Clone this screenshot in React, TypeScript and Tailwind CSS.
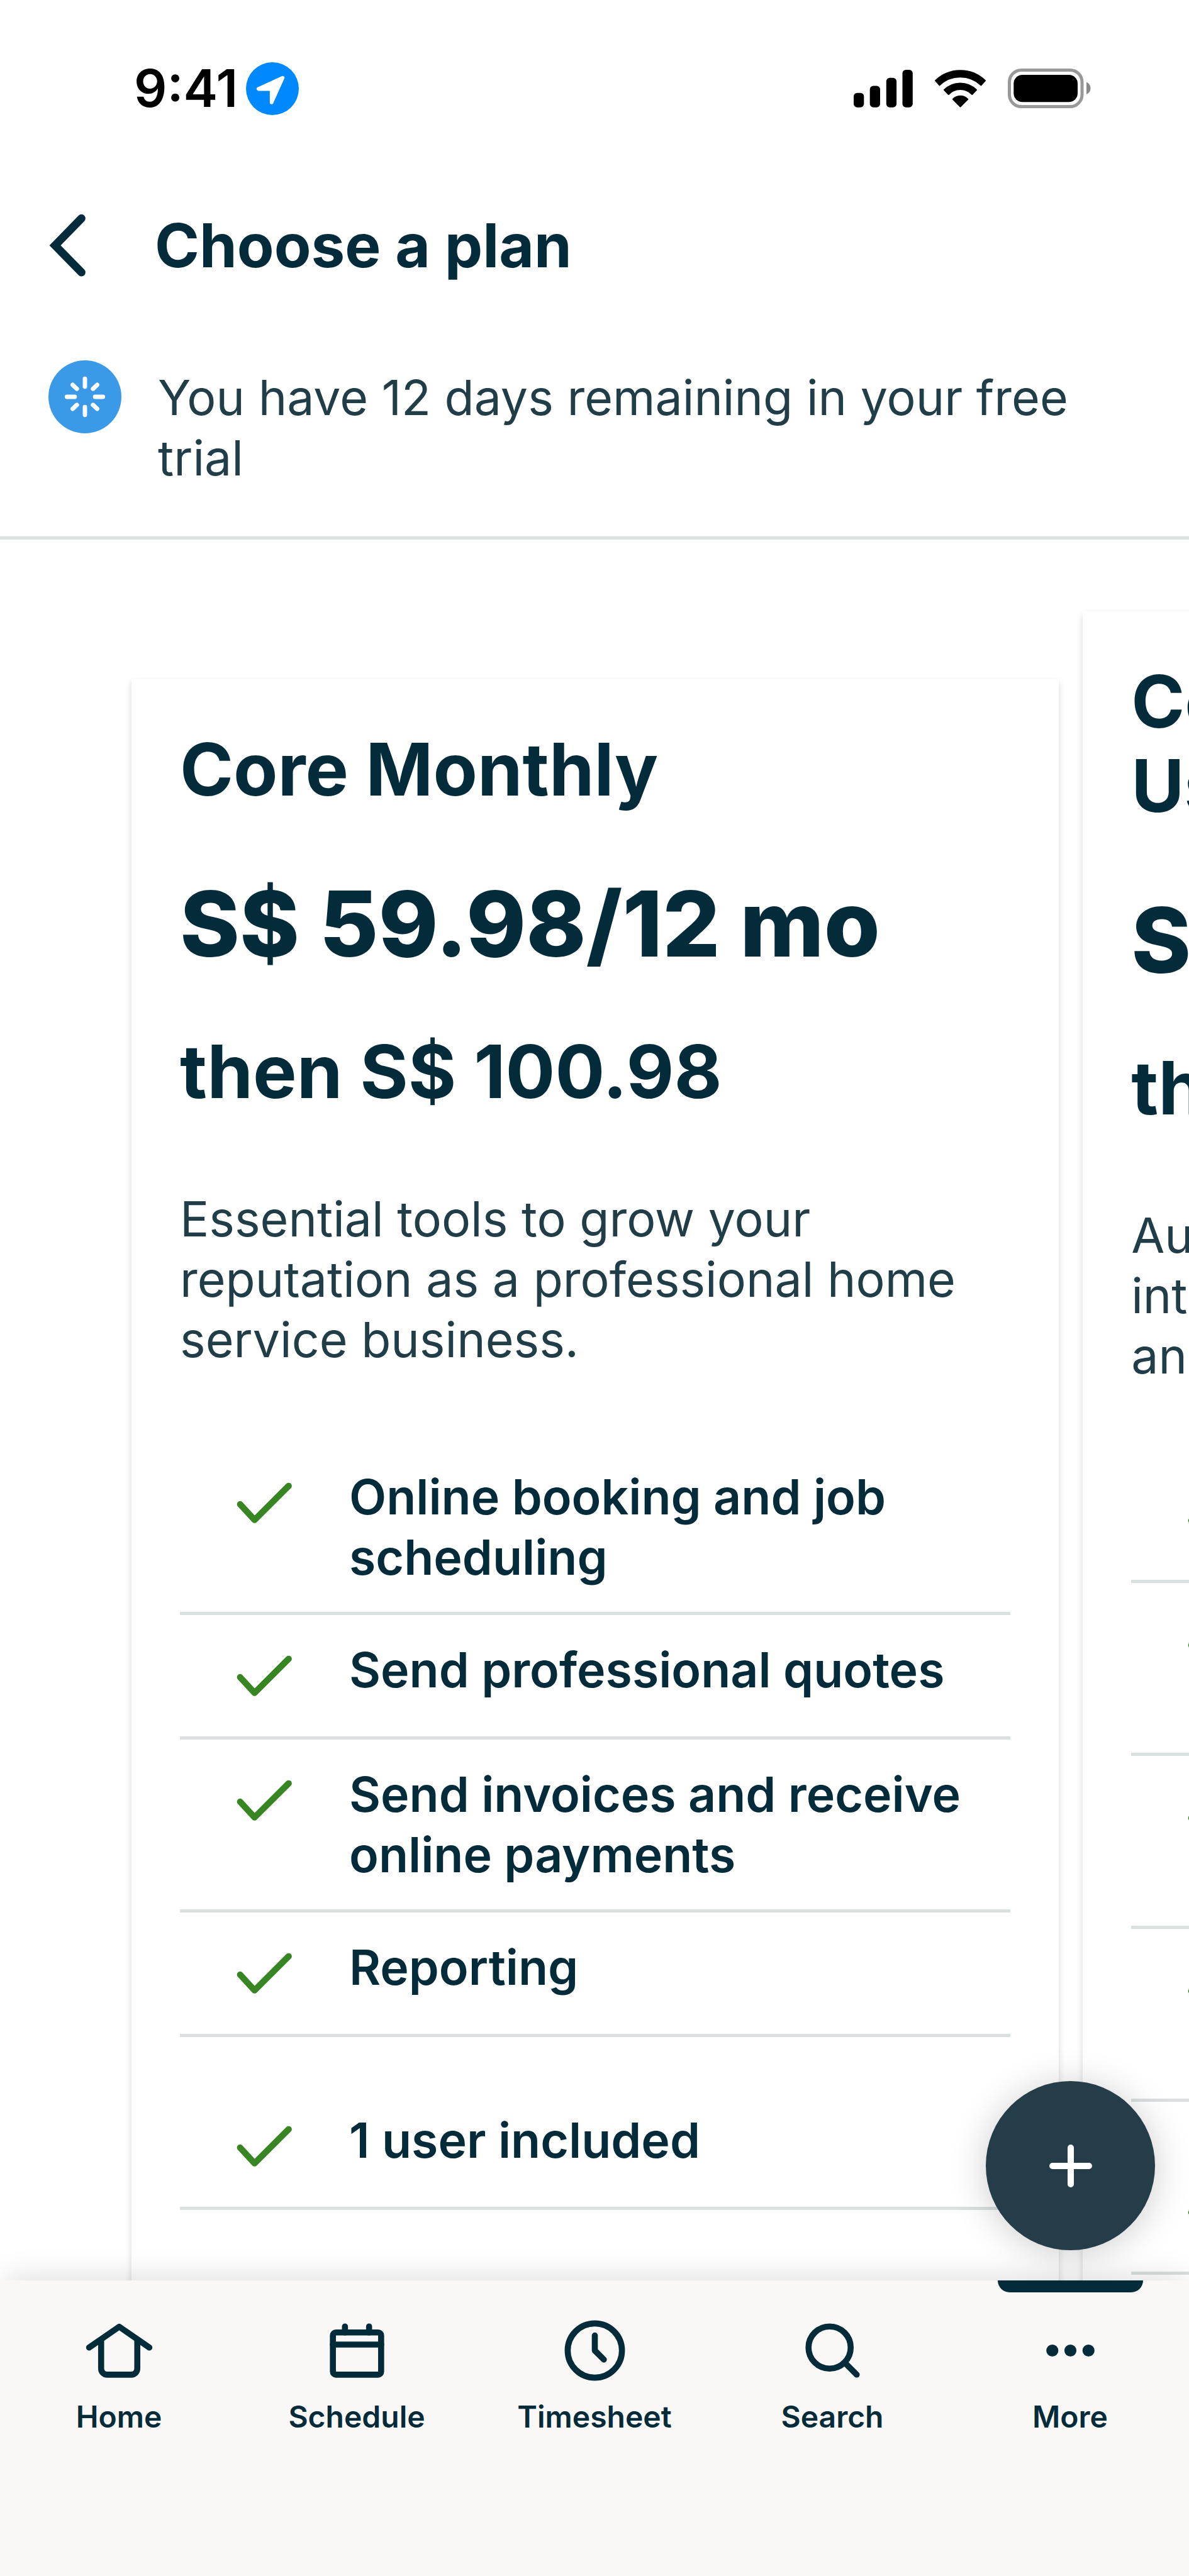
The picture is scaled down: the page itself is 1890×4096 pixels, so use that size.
import { ReactNode } from 'react'

type Feature = { text: string; spaced?: boolean }

const coreFeatures: Feature[] = [
  { text: 'Online booking and job scheduling' },
  { text: 'Send professional quotes' },
  { text: 'Send invoices and receive online payments' },
  { text: 'Reporting' },
  { text: '1 user included', spaced: true },
]

const connectFeatures: Feature[] = [
  { text: 'Automated reminders' },
  { text: 'Online time and expense tracking' },
  { text: 'QuickBooks Online sync for invoices' },
  { text: 'Custom automatic payments by card' },
  { text: 'Users included', spaced: true },
]

function CheckIcon() {
  return (
    <svg viewBox="0 0 24 24" className="size-[115px] shrink-0" fill="none" stroke="#388523" strokeWidth="2.1" strokeLinecap="round" strokeLinejoin="round">
      <path d="M3.9 12.5L8.7 17.7L20 6.4" />
    </svg>
  )
}

function FeatureRow({ text, spaced }: Feature) {
  return (
    <li className={`flex gap-[77px] border-b-[5px] border-[#dadfdf] pt-[39px] pb-[39px] pl-[77px] ${spaced ? 'mt-[77px]' : ''}`}>
      <CheckIcon />
      <span className="text-[77px] leading-[96px] font-semibold">{text}</span>
    </li>
  )
}

type PlanProps = {
  title: ReactNode
  price: string
  after: string
  description: ReactNode
  features: Feature[]
  className: string
}

function PlanCard({ title, price, after, description, features, className }: PlanProps) {
  return (
    <article className={`w-[78vw] shrink-0 self-start bg-white px-[77px] pt-[77px] pb-[200px] shadow-[0_5px_10px_rgba(0,0,0,0.16)] ${className}`}>
      <h2 className="text-[115px] leading-[134px] font-bold">{title}</h2>
      <p className="mt-[82px] text-[144px] leading-[192px] font-extrabold whitespace-nowrap">{price}</p>
      <p className="mt-[72px] text-[117px] leading-[134px] font-bold whitespace-nowrap">{after}</p>
      <p className="mt-[119px] text-[77px] leading-[96px] text-[#213d48]">{description}</p>
      <ul className="mt-[115px]">
        {features.map((f) => (
          <FeatureRow key={f.text} text={f.text} spaced={f.spaced} />
        ))}
      </ul>
    </article>
  )
}

function StatusBar() {
  return (
    <div className="flex h-[284px] items-start justify-between pt-[99px] pr-[156px] pl-[213px] text-black">
      <div className="flex items-center gap-[13px]">
        <span className="text-[82px] leading-[84px] font-semibold">9:41</span>
        <svg viewBox="592 33 256 256" className="size-[84px]">
          <circle cx="720" cy="161" r="128" fill="#0088ff" />
          <path d="M770 108L652 162L654 163H716V228Z" fill="#fff" stroke="#fff" strokeWidth="17" strokeLinejoin="round" />
        </svg>
      </div>
      <div className="flex items-center gap-[35px] pt-[10px]">
        <svg viewBox="0 0 94 60" className="h-[60px] w-[94px]">
          <rect x="0" y="36.7" width="16.3" height="23" rx="5.5" />
          <rect x="25.7" y="25.6" width="16.3" height="34.1" rx="5.5" />
          <rect x="51.8" y="12.8" width="16.3" height="46.9" rx="5.5" />
          <rect x="77.5" y="0" width="16.3" height="59.7" rx="5.5" />
        </svg>
        <svg viewBox="0 0 81 60" className="h-[60px] w-[81px]" stroke="#000" strokeWidth="2" strokeLinejoin="round">
          <path d="M1 17.2A56.7 56.7 0 0 1 80 17.2L73.6 24.4A48.4 48.4 0 0 0 7.4 24.4Z" />
          <path d="M15 32A36.3 36.3 0 0 1 66 32L59.2 39A26 26 0 0 0 21.8 39Z" />
          <path d="M28.8 46.8A16.3 16.3 0 0 1 52.2 46.8L40.5 58.6Z" />
        </svg>
        <svg viewBox="0 0 132 63" className="h-[63px] w-[132px]">
          <rect x="2.5" y="2.5" width="115.5" height="58" rx="19" fill="none" stroke="#999" strokeWidth="5" />
          <rect x="9.3" y="10" width="101.7" height="43.3" rx="14" />
          <path d="M125 21.6C129 23.5 131.5 27 131.5 31.4C131.5 35.7 129 39 125 41Z" fill="#8a8a8a" />
        </svg>
      </div>
    </div>
  )
}

function TabItem({ label, active, children }: { label: string; active?: boolean; children: ReactNode }) {
  return (
    <a href="#" className="relative flex flex-1 flex-col items-center gap-[19px] pt-[54px] pb-[224px]">
      {active && <span className="absolute top-0 h-[19px] w-[231px] rounded-b-[19px] bg-[#032b3a]" />}
      <svg viewBox="0 0 24 24" className="size-[115px]" fill="none" stroke="currentColor" strokeWidth="2" strokeLinecap="round" strokeLinejoin="round">
        {children}
      </svg>
      <span className="text-[48px] leading-[58px] font-semibold">{label}</span>
    </a>
  )
}

export default function App() {
  return (
    <div className="flex h-screen flex-col overflow-hidden bg-white font-['Inter',sans-serif] text-[#032b3a]">
      <StatusBar />

      <header className="flex h-[212px] items-center gap-[110px] px-[78px]">
        <button type="button" aria-label="Back">
          <svg viewBox="0 0 177 303" className="h-[100px] w-[58px]" fill="none" stroke="#032b3a" strokeWidth="39" strokeLinecap="round">
            <path d="M157 21L29 152L157 283" />
          </svg>
        </button>
        <h1 className="text-[96px] leading-[116px] font-bold">Choose a plan</h1>
      </header>

      {/* Trial banner */}
      <section className="flex gap-[58px] border-b-[5px] border-[#dadfdf] px-[77px] py-[77px]">
        <svg viewBox="-176 -176 352 352" className="size-[116px] shrink-0" stroke="#fff" strokeWidth="21" strokeLinecap="round">
          <circle r="176" fill="#3b9ae8" stroke="none" />
          <path d="M0 -87V-49M0 49V87M-87 0H-49M49 0H87M-59 -58L-39 -39M59 -58L39 -39M-59 58L-39 39M59 58L39 39" />
        </svg>
        <p className="pt-[11px] text-[77px] leading-[96px] text-[#213d48]">You have 12 days remaining in your free trial</p>
      </section>

      {/* Plans carousel */}
      <main className="relative min-h-0 flex-1">
        <div className="flex h-full gap-[38px] overflow-hidden pl-[209px]">
          <PlanCard
            title="Core Monthly"
            price="S$ 59.98/12 mo"
            after="then S$ 100.98"
            description="Essential tools to grow your reputation as a professional home service business."
            features={coreFeatures}
            className="mt-[222px]"
          />
          <PlanCard
            title={<>Connect - Multiple<br />Users Monthly</>}
            price="S$"
            after="then S$"
            description={<>Automated tools,<br />integrated payments<br />and reminders.</>}
            features={connectFeatures}
            className="mt-[114px]"
          />
        </div>
        <button type="button" aria-label="Create" className="absolute right-[54px] bottom-[48px] flex size-[269px] items-center justify-center rounded-full bg-[#243d48] shadow-[0_5px_58px_rgba(0,0,0,0.2)]">
          <svg viewBox="0 0 68 68" className="size-[68px]" stroke="#fff" strokeWidth="10" strokeLinecap="round">
            <path d="M34 5V63M5 34H63" />
          </svg>
        </button>
      </main>

      <nav className="relative z-10 flex bg-[#f9f8f6] shadow-[0_-10px_48px_-10px_rgba(0,0,0,0.16)]">
        <TabItem label="Home">
          <path d="M2 11L12 4.1L22 11" />
          <path d="M6 8.5V18a2 2 0 0 0 2 2h8a2 2 0 0 0 2-2V8.5" />
        </TabItem>
        <TabItem label="Schedule">
          <rect x="4" y="6" width="16" height="14" rx="1" />
          <path d="M4 10H20M8 4V6M16 4V6" />
        </TabItem>
        <TabItem label="Timesheet">
          <circle cx="12" cy="12" r="9" />
          <path d="M12 7V12L15 15" />
        </TabItem>
        <TabItem label="Search">
          <circle cx="11" cy="11" r="7" />
          <path d="M16 16L20 20" />
        </TabItem>
        <TabItem label="More" active>
          <path d="M6 12h0M12 12h0M18 12h0" strokeWidth="4" />
        </TabItem>
      </nav>
    </div>
  )
}
